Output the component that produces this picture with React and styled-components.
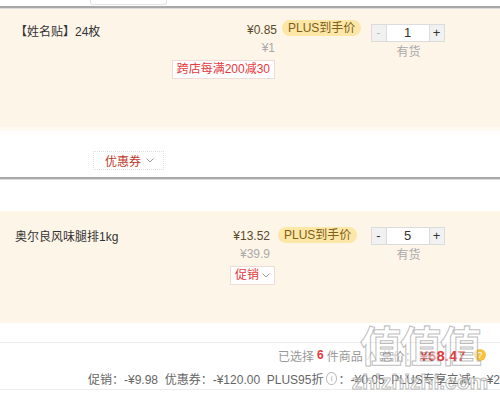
import React from "react";
import styled, { createGlobalStyle } from "styled-components";

const Global = createGlobalStyle`
  html, body { margin: 0; padding: 0; background: #fff; }
  body {
    width: 500px; height: 402px; overflow: hidden;
    font-family: "Liberation Sans", "Noto Sans CJK SC", sans-serif;
    font-size: 12px; color: #333;
  }
`;

const Page = styled.div`
  position: relative;
  width: 500px;
  height: 402px;
  overflow: hidden;
`;

const TopStrip = styled.div`
  height: 6px;
  padding-left: 90px;
  background: #fff;
`;

const TopGhost = styled.div`
  width: 75px;
  height: 4px;
  border: 1px solid #e4e4e4;
  border-top: none;
  border-radius: 0 0 3px 3px;
`;

const Divider = styled.div`
  height: 2px;
  background: #a8a8a8;
  border-bottom: 1px solid #dcdcdc;
`;

const Item = styled.div`
  display: flex;
  align-items: flex-start;
  height: ${(p) => p.$h}px;
  box-sizing: border-box;
  padding: ${(p) => p.$pt}px 0 0 15px;
  background: #fef5e9;
`;

const Name = styled.div`
  width: ${(p) => p.$w}px;
  padding-top: ${(p) => p.$nt}px;
  color: #333;
  font-size: 12px;
  line-height: 16px;
  white-space: nowrap;
`;

const PriceCol = styled.div`
  width: ${(p) => p.$w}px;
  display: flex;
  flex-direction: column;
  align-items: flex-end;
`;

const Price = styled.div`
  padding-top: ${(p) => p.$pt || 0}px;
  font-size: 12px;
  line-height: 16px;
  color: #5a4a2a;
  margin-right: ${(p) => p.$mr || 0}px;
`;

const OrigPrice = styled.div`
  margin-top: 2px;
  font-size: 12px;
  line-height: 16px;
  color: #aaa;
  margin-right: ${(p) => p.$mr || 0}px;
`;

const PromoTag = styled.div`
  margin-top: ${(p) => p.$mt || 4}px;
  display: flex;
  align-items: center;
  gap: 3px;
  height: 17px;
  padding: 0 4px;
  border: 1px solid #efdcd6;
  background: #fff;
  color: #e4393c;
  font-size: 12px;
  line-height: 17px;
`;

const Chevron = styled.span`
  display: inline-flex;
  color: #aaa;
`;

const BadgeCol = styled.div`
  width: ${(p) => p.$w}px;
  padding-top: ${(p) => p.$bt}px;
  padding-left: ${(p) => p.$bl}px;
  box-sizing: border-box;
`;

const PlusBadge = styled.span`
  display: inline-block;
  height: 16px;
  line-height: 16px;
  padding: 0 6px;
  border-radius: 8px;
  background: #fde7a6;
  color: #7d5e1c;
  font-size: 12px;
  white-space: nowrap;
`;

const QtyCol = styled.div`
  padding-top: ${(p) => p.$qt}px;
  display: flex;
  flex-direction: column;
  align-items: center;
  width: 75px;
`;

const Qty = styled.div`
  display: flex;
  height: 18px;
  border: 1px solid #dcdcdc;
  box-sizing: border-box;
  background: #fff;
`;

const QtyBtn = styled.span`
  width: 14px;
  display: flex;
  align-items: center;
  justify-content: center;
  background: #f1f1f1;
  color: ${(p) => (p.$dim ? "#bbb" : "#333")};
  font-size: 13px;
  line-height: 16px;
  ${(p) => (p.$left ? "border-right: 1px solid #dcdcdc;" : "border-left: 1px solid #dcdcdc;")}
`;

const QtyInput = styled.span`
  width: 42px;
  text-align: center;
  font-size: 13px;
  line-height: 16px;
  color: #333;
`;

const Stock = styled.div`
  margin-top: 2px;
  color: #aaa;
  font-size: 12px;
  line-height: 16px;
  margin-left: 2px;
`;

const Band = styled.div`
  height: 4px;
  background: #fffbf2;
`;

const CouponBar = styled.div`
  height: 46px;
  box-sizing: border-box;
  padding: 20px 0 0 93px;
  background: #fff;
`;

const CouponBtn = styled.div`
  display: inline-flex;
  align-items: center;
  gap: 5px;
  height: 19px;
  box-sizing: border-box;
  padding: 0 9px 0 11px;
  border: 1px dotted #dedede;
  color: #c0392b;
  font-size: 12px;
`;

const Spacer = styled.div`
  height: ${(p) => p.$h}px;
  background: #fff;
`;

const Line = styled.div`
  height: 1px;
  background: #ececec;
`;

const SummaryTop = styled.div`
  height: 24px;
  display: flex;
  align-items: center;
  padding-left: 278px;
  gap: 3px;
  color: #999;
  font-size: 12px;
  white-space: nowrap;
`;

const Count = styled.b`
  color: #e4393c;
  font-weight: bold;
`;

const Total = styled.span`
  color: #e4393c;
  font-weight: bold;
  font-size: 15px;
`;

const Help = styled.span`
  display: inline-flex;
  align-items: center;
  justify-content: center;
  width: 12px;
  height: 12px;
  border-radius: 50%;
  background: #f5c343;
  color: #fff;
  font-size: 9px;
  margin-left: 5px;
`;

const SummaryBottom = styled.div`
  height: 22px;
  display: flex;
  align-items: center;
  padding-left: 88px;
  color: #666;
  font-size: 12px;
  white-space: nowrap;
`;

const InfoIcon = styled.span`
  display: inline-flex;
  align-items: center;
  justify-content: center;
  width: 11px;
  height: 11px;
  border: 1px solid #bbb;
  border-radius: 50%;
  font-size: 8px;
  color: #aaa;
  margin: 0 2px 0 3px;
`;

const Watermark = styled.div`
  position: absolute;
  left: 345px;
  top: 318px;
  width: 150px;
  pointer-events: none;
  text-align: center;
  font-family: "Noto Sans CJK SC", sans-serif;
  color: rgba(255, 255, 255, 0.5);
  -webkit-text-stroke: 1px rgba(120, 120, 120, 0.5);
`;

const WmBig = styled.div`
  font-size: 42px;
  line-height: 52px;
  letter-spacing: -2px;
  font-weight: 700;
`;

const WmSmall = styled.div`
  font-family: "Liberation Sans", sans-serif;
  font-size: 21px;
  line-height: 24px;
  font-weight: 700;
`;

const ChevronSvg = () => (
  <svg width="8" height="5" viewBox="0 0 8 5">
    <path d="M0.5 0.5 L4 4 L7.5 0.5" fill="none" stroke="#999" strokeWidth="1" />
  </svg>
);

export default function App() {
  return (
    <Page>
      <Global />
      <TopStrip>
        <TopGhost />
      </TopStrip>
      <Divider />

      <Item $h={118} $pt={6}>
        <Name $w={150} $nt={9}>【姓名贴】24枚</Name>
        <PriceCol $w={110}>
          <Price $pt={7} $mr={-2}>¥0.85</Price>
          <OrigPrice>¥1</OrigPrice>
          <PromoTag $mt={4}>跨店每满200减30</PromoTag>
        </PriceCol>
        <BadgeCol $w={95} $bt={5} $bl={7}>
          <PlusBadge>PLUS到手价</PlusBadge>
        </BadgeCol>
        <QtyCol $qt={9}>
          <Qty>
            <QtyBtn $left $dim>-</QtyBtn>
            <QtyInput>1</QtyInput>
            <QtyBtn>+</QtyBtn>
          </Qty>
          <Stock>有货</Stock>
        </QtyCol>
      </Item>
      <Band />
      <CouponBar>
        <CouponBtn>
          优惠券
          <Chevron>
            <ChevronSvg />
          </Chevron>
        </CouponBtn>
      </CouponBar>
      <Divider />
      <Spacer $h={31} />

      <Item $h={112} $pt={16}>
        <Name $w={150} $nt={2}>奥尔良风味腿排1kg</Name>
        <PriceCol $w={110}>
          <Price $pt={1} $mr={5}>¥13.52</Price>
          <OrigPrice $mr={5}>¥39.9</OrigPrice>
          <PromoTag $mt={4}>
            促销
            <Chevron>
              <ChevronSvg />
            </Chevron>
          </PromoTag>
        </PriceCol>
        <BadgeCol $w={95} $bt={0} $bl={3}>
          <PlusBadge>PLUS到手价</PlusBadge>
        </BadgeCol>
        <QtyCol $qt={0}>
          <Qty>
            <QtyBtn $left>-</QtyBtn>
            <QtyInput>5</QtyInput>
            <QtyBtn>+</QtyBtn>
          </Qty>
          <Stock>有货</Stock>
        </QtyCol>
      </Item>
      <Spacer $h={19} />
      <Line />
      <SummaryTop>
        <span>已选择</span>
        <Count>6</Count>
        <span>件商品</span>
        <span style={{ color: "#bbb" }}>∧</span>
        <span>总价：</span>
        <Total>¥68.47</Total>
        <Help>?</Help>
      </SummaryTop>
      <SummaryBottom>
        促销：-¥9.98&nbsp;&nbsp;优惠券：-¥120.00&nbsp;&nbsp;PLUS95折
        <InfoIcon>i</InfoIcon>：-¥0.05&nbsp;&nbsp;PLUS专享立减：-¥2
      </SummaryBottom>
      <Line />

      <Watermark>
        <WmBig>值值值</WmBig>
        <WmSmall>zhizhizhi.com</WmSmall>
      </Watermark>
    </Page>
  );
}
